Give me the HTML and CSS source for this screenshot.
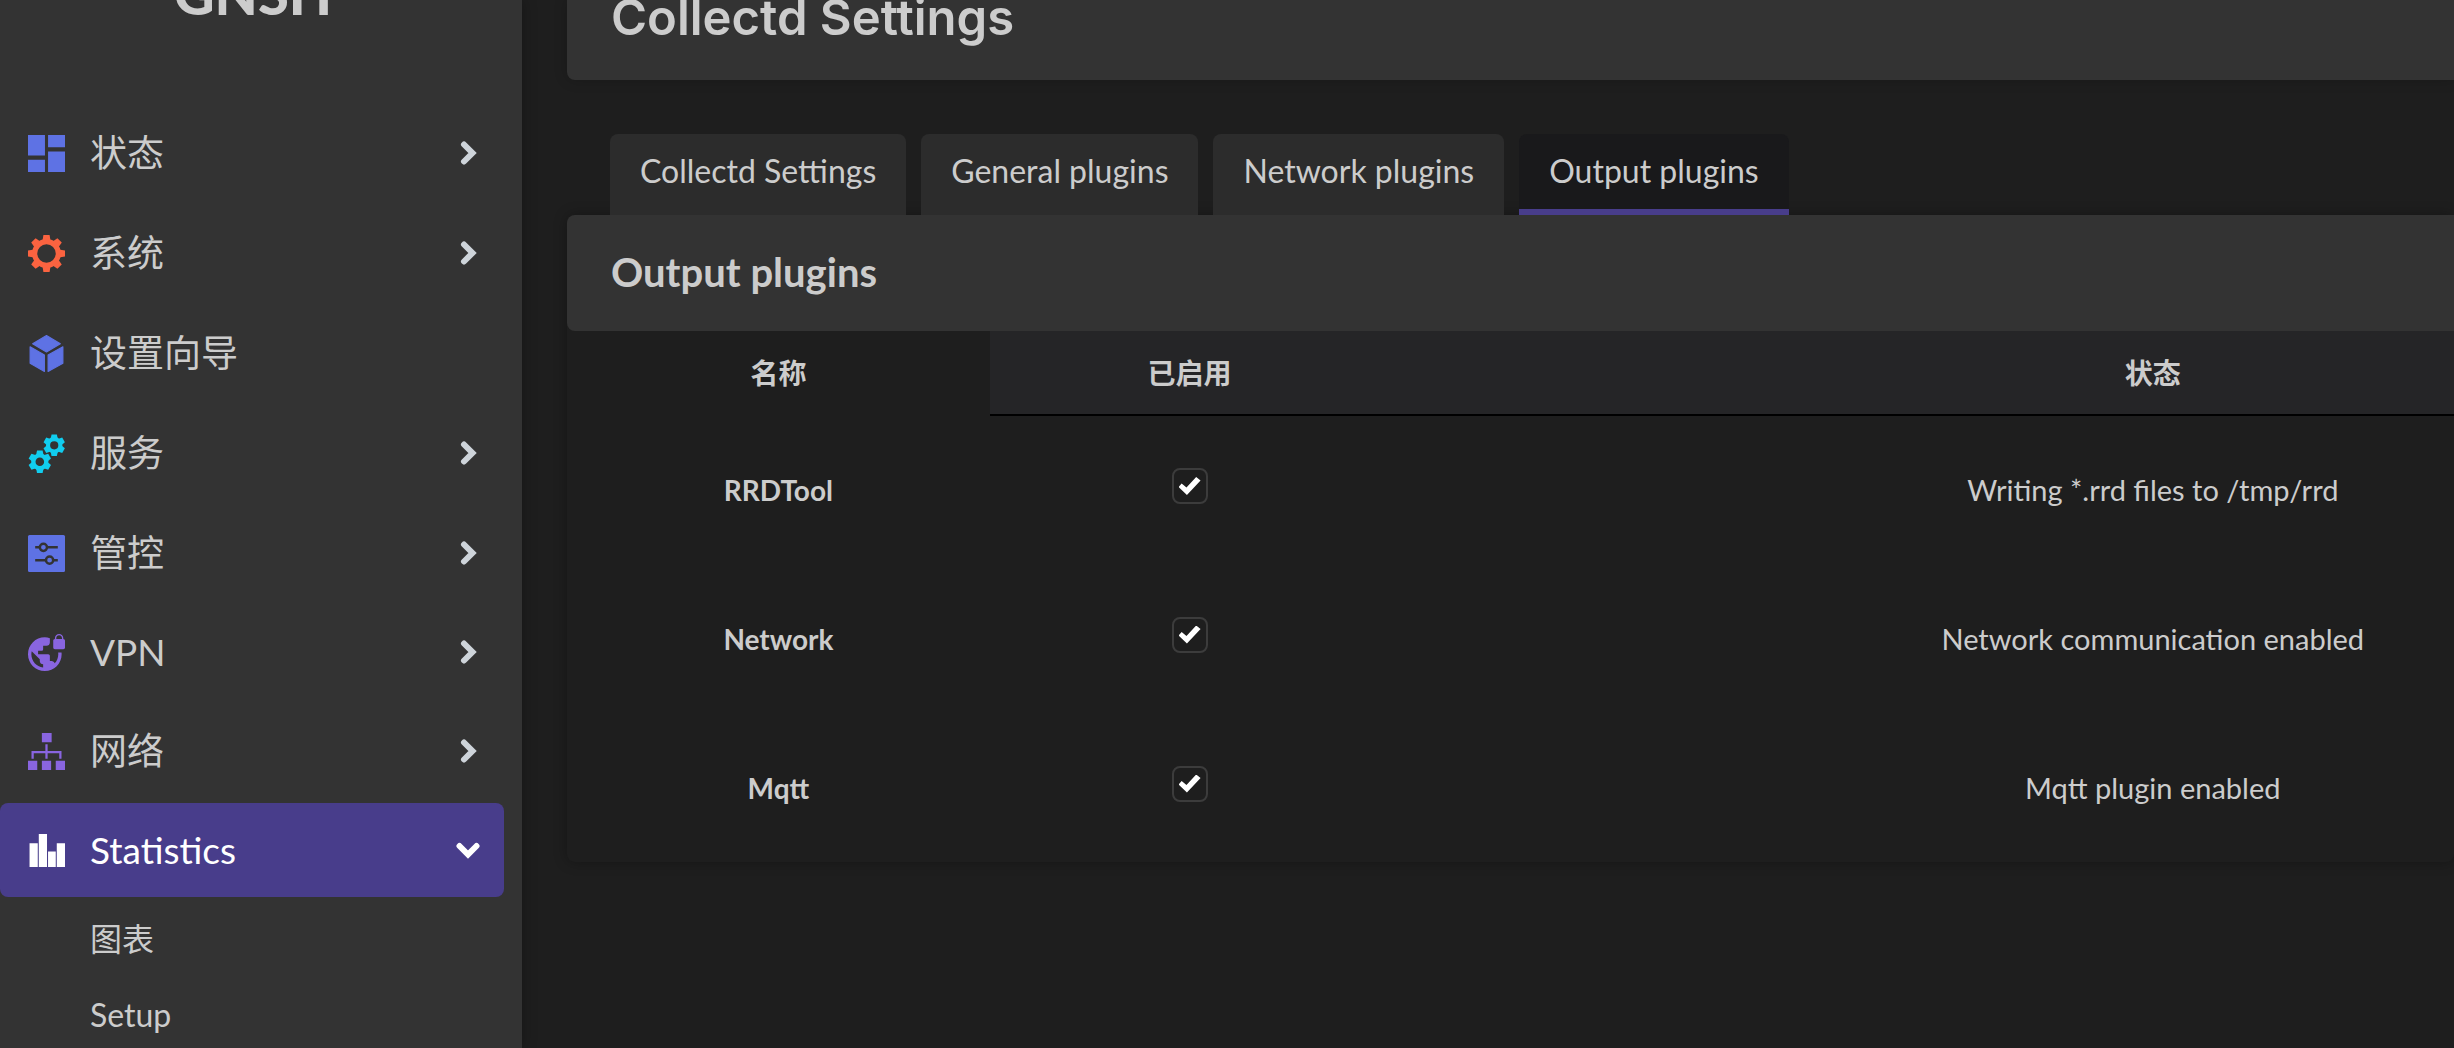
FILE: index.html
```html
<!DOCTYPE html>
<html lang="zh-CN">
<head>
<meta charset="utf-8">
<meta name="viewport" content="width=device-width, initial-scale=1">
<title>Collectd Settings</title>
<link rel="stylesheet" href="styles.css">
</head>
<body>
<svg class="defs" width="0" height="0" aria-hidden="true">
  <symbol id="chevron" viewBox="0 0 24 24"><path d="M8 3.500l8.500 8.500L8 20.500" fill="none" stroke="currentColor" stroke-width="6" stroke-linejoin="miter" stroke-linecap="round"/></symbol>
  <symbol id="cog6" viewBox="-11 -11 22 22">
    <g fill="currentColor"><path id="tooth6" d="M-3.500-6L-2.600-10.500h5.200L3.500-6z"/>
    <use href="#tooth6" transform="rotate(60)"/><use href="#tooth6" transform="rotate(120)"/><use href="#tooth6" transform="rotate(180)"/><use href="#tooth6" transform="rotate(240)"/><use href="#tooth6" transform="rotate(300)"/></g>
    <circle r="6" fill="none" stroke="currentColor" stroke-width="4"/>
  </symbol>
</svg>
<div class="layout">
  <aside class="sidebar">
    <a class="logo" href="#">GNSH</a>
    <nav aria-label="主菜单">
      <ul class="menu">
        <li><a class="item" href="#">
          <svg class="icon blue" viewBox="0 0 36 36"><path fill="currentColor" d="M0 0h16.500v20H0zM0 24h16.500v12H0zM19.500 0H36v12H19.500zM19.500 16H36v20H19.500z"/></svg>
          <span class="label">状态</span><svg class="arrow"><use href="#chevron"/></svg></a></li>
        <li><a class="item" href="#">
          <svg class="icon orange" viewBox="-18 -18 36 36"><g fill="currentColor"><path id="tooth8" d="M-4-12L-3-18h6L4-12z"/><use href="#tooth8" transform="rotate(45)"/><use href="#tooth8" transform="rotate(90)"/><use href="#tooth8" transform="rotate(135)"/><use href="#tooth8" transform="rotate(180)"/><use href="#tooth8" transform="rotate(225)"/><use href="#tooth8" transform="rotate(270)"/><use href="#tooth8" transform="rotate(315)"/></g><circle r="11.500" fill="none" stroke="currentColor" stroke-width="5"/></svg>
          <span class="label">系统</span><svg class="arrow"><use href="#chevron"/></svg></a></li>
        <li><a class="item" href="#">
          <svg class="icon blue" viewBox="0 0 36 36"><path fill="currentColor" stroke="currentColor" stroke-linejoin="round" d="M18 .500L31.500 8.500 18 16.500 4.500 8.500zM2 11.500L16 19.500V35.500L2 27.500zM34 11.500V27.500L19.500 35.500V19.500z"/></svg>
          <span class="label">设置向导</span></a></li>
        <li><a class="item" href="#">
          <svg class="icon cyan" viewBox="0 0 36 36"><use href="#cog6" x="14.500" y="-1" width="22" height="22"/><use href="#cog6" x="0" y="14.500" width="23" height="23"/></svg>
          <span class="label">服务</span><svg class="arrow"><use href="#chevron"/></svg></a></li>
        <li><a class="item" href="#">
          <svg class="icon blue" viewBox="0 0 36 36"><rect width="36" height="36" rx="1.500" fill="currentColor"/><g fill="none" stroke="#333" stroke-width="2.400"><path d="M7 12h4.500M18.500 12H29M7 24.500h10.500M24.500 24.500H29"/><circle cx="15" cy="12" r="3.500"/><circle cx="21" cy="24.500" r="3.500"/></g></svg>
          <span class="label">管控</span><svg class="arrow"><use href="#chevron"/></svg></a></li>
        <li><a class="item latin" href="#">
          <svg class="icon purple" viewBox="1 1 22 22"><path fill="currentColor" d="M22 4v-.5C22 2.120 20.880 1 19.500 1S17 2.120 17 3.500V4c-.550 0-1 .450-1 1v4c0 .550.450 1 1 1h5c.550 0 1-.450 1-1V5c0-.550-.450-1-1-1zm-.8 0h-3.400v-.5c0-.940.760-1.700 1.700-1.700s1.700.760 1.700 1.700V4zm-2.280 8c.040.330.080.660.080 1 0 2.080-.8 3.970-2.100 5.390-.260-.810-1-1.390-1.900-1.390h-1v-3c0-.550-.450-1-1-1H7v-2h2c.550 0 1-.450 1-1V8h2c1.100 0 2-.9 2-2V3.460c-.950-.3-1.950-.460-3-.460C5.480 3 1 7.480 1 13s4.480 10 10 10 10-4.480 10-10c0-.340-.020-.670-.050-1h-2.030zM10 20.930c-3.950-.490-7-3.850-7-7.930 0-.620.080-1.210.210-1.790L8 16v1c0 1.100.9 2 2 2v1.930z"/></svg>
          <span class="label">VPN</span><svg class="arrow"><use href="#chevron"/></svg></a></li>
        <li><a class="item" href="#">
          <svg class="icon purple" viewBox="0 0 36 36"><path fill="currentColor" d="M13.500 0h9.500v9h-9.500zM0 27h9v9H0zM13.500 27h9v9h-9zM27 27h9v9h-9z"/><path fill="none" stroke="currentColor" stroke-width="2.200" d="M18 11v14M4.500 25v-6.500h27V25"/></svg>
          <span class="label">网络</span><svg class="arrow"><use href="#chevron"/></svg></a></li>
        <li><a class="item latin active" href="#" aria-expanded="true">
          <svg class="icon" viewBox="0 0 36 36"><path fill="currentColor" d="M1.500 11h8v23h-8zM10.500 2h8v32h-8zM19.500 19h7.500v15h-7.500zM28 11h8v23h-8z"/></svg>
          <span class="label">Statistics</span><svg class="arrow open"><use href="#chevron"/></svg></a>
          <ul class="submenu">
            <li><a href="#">图表</a></li>
            <li><a href="#">Setup</a></li>
          </ul></li>
      </ul>
    </nav>
  </aside>
  <main class="main">
    <header class="page-head"><h2>Collectd Settings</h2></header>
    <nav class="tabs" aria-label="Plugins">
      <a class="tab" href="#">Collectd Settings</a>
      <a class="tab" href="#">General plugins</a>
      <a class="tab" href="#">Network plugins</a>
      <a class="tab current" href="#" aria-current="page">Output plugins</a>
    </nav>
    <section class="panel">
      <h3>Output plugins</h3>
      <table class="plugins">
        <colgroup><col class="col-name"><col class="col-enabled"><col></colgroup>
        <thead><tr><th class="name" scope="col">名称</th><th scope="col">已启用</th><th scope="col">状态</th></tr></thead>
        <tbody>
          <tr><th scope="row"><label for="rrdtool">RRDTool</label></th><td><input class="check" type="checkbox" id="rrdtool" checked></td><td class="state">Writing *.rrd files to /tmp/rrd</td></tr>
          <tr><th scope="row"><label for="network">Network</label></th><td><input class="check" type="checkbox" id="network" checked></td><td class="state">Network communication enabled</td></tr>
          <tr><th scope="row"><label for="mqtt">Mqtt</label></th><td><input class="check" type="checkbox" id="mqtt" checked></td><td class="state">Mqtt plugin enabled</td></tr>
        </tbody>
      </table>
    </section>
  </main>
</div>
</body>
</html>
```
FILE: styles.css
```css
* { box-sizing: border-box; }
body {
  margin: 0;
  background: #1e1e1e;
  color: #ccc;
  font-family: Lato, "Noto Sans CJK SC", sans-serif;
}
a { color: inherit; text-decoration: none; }
ul { margin: 0; padding: 0; list-style: none; }
h2, h3 { margin: 0; font-weight: 700; }
.defs { display: block; }

.layout { display: flex; height: 100vh; overflow: hidden; }

/* Sidebar */
.sidebar {
  flex: 0 0 522px;
  background: #333;
  box-shadow: 0 0 14px rgba(0, 0, 0, .3);
  overflow: hidden;
}
.logo {
  display: block;
  height: 111px;
  margin-top: -6px;
  padding-left: 174px;
  font: 900 56px/0 Lato, sans-serif;
}
.menu { padding-right: 18px; }
.item {
  display: flex;
  align-items: center;
  height: 96px;
  margin-bottom: 4px;
  padding: 0 24px 0 28px;
  border-radius: 8px;
  font-size: 37px;
  line-height: 48px;
}
.latin { height: 94px; }
.label { flex: 1; margin-left: 25px; }
.icon { width: 37px; height: 37px; overflow: visible; }
.arrow { width: 24px; height: 24px; color: #ced4da; }
.open { transform: rotate(90deg); color: #fff; }
.active { background: #483d8b; color: #fff; }
.blue { color: #5e72e4; }
.orange { color: #fb6340; }
.cyan { color: #11cdef; }
.purple { color: #8965e0; }
.submenu a {
  display: block;
  padding: 14px 0 14px 90px;
  font-size: 32px;
  line-height: 48px;
}

/* Content */
.main { flex: 1; min-width: 0; padding-left: 45px; overflow: hidden; }
.page-head {
  padding: 0 44px 44px;
  border-radius: 0 0 0 8px;
  background: #333;
  box-shadow: 0 0 14px rgba(0, 0, 0, .2);
}
.page-head h2 { font: 600 49px/36px Inter, sans-serif; }
.tabs { display: flex; gap: 15px; padding: 54px 43px 0; }
.tab {
  padding: 17px 30px 18px;
  border-bottom: 6px solid #2c2c2c;
  border-radius: 8px 8px 0 0;
  background: #2c2c2c;
  font-size: 32px;
  line-height: 40px;
}
.current { border-bottom-color: #483d8b; background: #19191b; }
.panel { border-radius: 8px; box-shadow: 0 0 14px rgba(0, 0, 0, .3); background: #1e1e1e; }
.panel h3 {
  padding: 33px 44px 35px;
  border-radius: 8px 0 0 8px;
  background: #333;
  font-size: 40px;
  line-height: 48px;
}

/* The table is wider than its panel; the status column runs past the edge. */
.plugins {
  width: 124.5%;
  border-collapse: collapse;
  table-layout: fixed;
  font-size: 28px;
  line-height: 36px;
  text-align: center;
}
.col-name { width: 18%; }
.col-enabled { width: 17%; }
.plugins th, .plugins td { padding: 0; }
.plugins thead th { height: 84px; border-bottom: 2px solid #000; background: #252527; }
.plugins thead .name { border-bottom-color: transparent; background: none; }
.plugins tbody tr { height: 149px; }
.state { font-size: 29px; }
.check {
  appearance: none;
  display: inline-grid;
  place-content: center;
  width: 36px;
  height: 36px;
  margin: 0 0 8px;
  border: 2px solid #3c3c3c;
  border-radius: 8px;
  vertical-align: middle;
}
.check:checked::before {
  content: "";
  width: 22px;
  height: 18px;
  background: #fff;
  clip-path: polygon(0 55%, 14% 36%, 36% 58%, 80% 0, 100% 20%, 38% 100%);
}
```
